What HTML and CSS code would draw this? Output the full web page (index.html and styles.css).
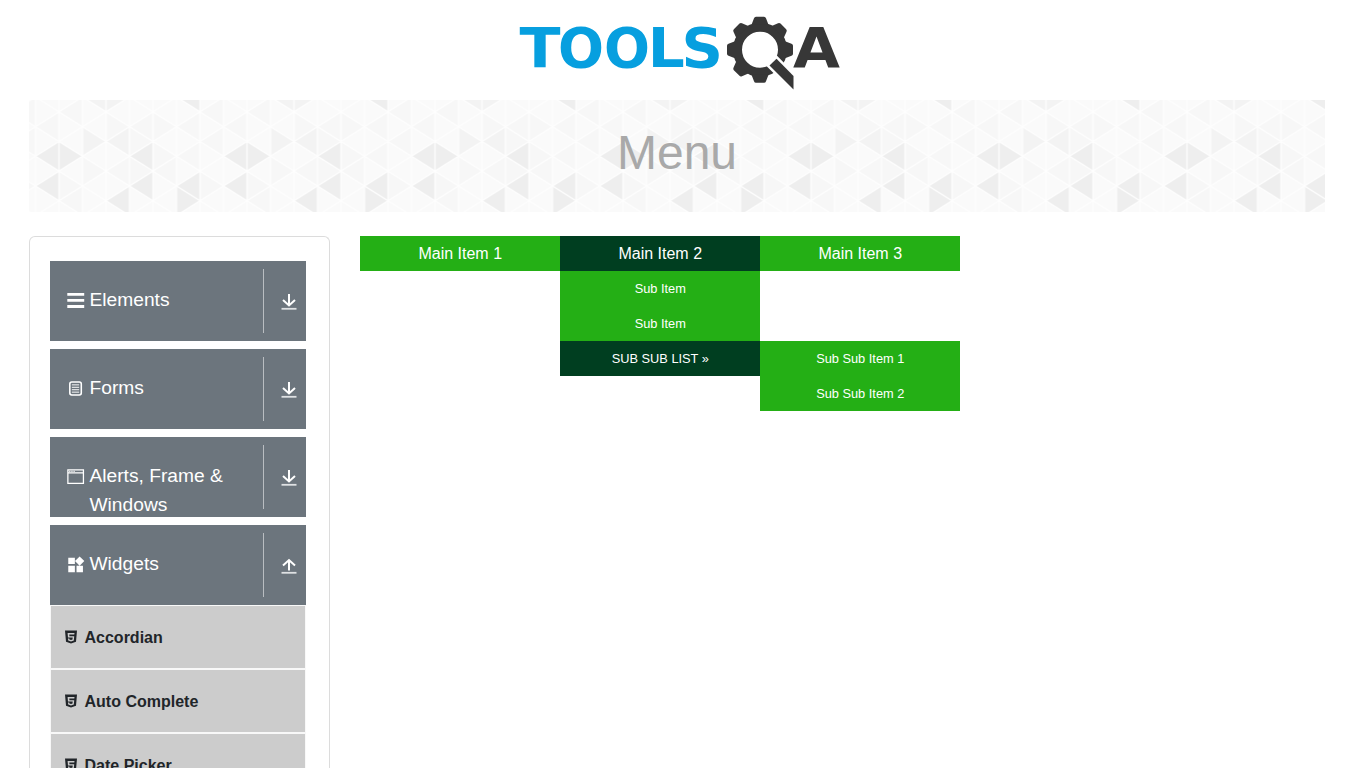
FILE: index.html
```
<!DOCTYPE html>
<html lang="en">
<head>
<meta charset="utf-8">
<title>Menu</title>
<link rel="stylesheet" href="styles.css">
</head>
<body>
<svg class="defs" width="0" height="0">
  <symbol id="down" viewBox="0 0 16 18"><path d="M8 1v11M2 7 8 12.500 14 7" fill="none" stroke="currentColor" stroke-width="2"/><path d="M.5 15.800h15" stroke="#dfe1e3" stroke-width="1.800"/></symbol>
  <symbol id="up" viewBox="0 0 16 18"><path d="M8 13.500V3M2 8.500 8 3 14 8.500" fill="none" stroke="currentColor" stroke-width="2"/><path d="M.5 15.800h15" stroke="#dfe1e3" stroke-width="1.800"/></symbol>
  <symbol id="html5" viewBox="0 0 12 14"><path fill="currentColor" fill-rule="evenodd" d="M0 .5h12l-1 11.200L6 13.500 1 11.700zM2.600 3l.4 4.500h4.700l-.2 2-1.500.5-1.600-.5-.1-.9H3l.2 2 2.800.9 2.800-.9.400-4.400H4.400L4.300 4.400h5L9.500 3z"/></symbol>
</svg>
<header class="header">
  <svg class="logo" viewBox="0 0 322 76" width="322" height="76" role="img" aria-label="TOOLSQA">
    <g class="logo-blue">
      <text x="0.500" y="51.800" textLength="41" lengthAdjust="spacingAndGlyphs">T</text>
      <text x="39" y="51.800" textLength="46" lengthAdjust="spacingAndGlyphs">O</text>
      <text x="85" y="51.800" textLength="46" lengthAdjust="spacingAndGlyphs">O</text>
      <text x="128.700" y="51.800" textLength="37" lengthAdjust="spacingAndGlyphs">L</text>
      <text x="162.500" y="51.800" textLength="41.500" lengthAdjust="spacingAndGlyphs">S</text>
    </g>
    <g transform="translate(241 34.700)" fill="#373737">
      <circle r="22.500" fill="none" stroke="#373737" stroke-width="9"/>
      <path id="tooth" d="M-8.500-25-6-31.500Q-5.500-33-4-33H4Q5.500-33 6-31.500L8.500-25z"/>
      <use href="#tooth" transform="rotate(45)"/><use href="#tooth" transform="rotate(90)"/>
      <use href="#tooth" transform="rotate(180)"/><use href="#tooth" transform="rotate(225)"/>
      <use href="#tooth" transform="rotate(270)"/><use href="#tooth" transform="rotate(315)"/>
      <path stroke="#fff" stroke-width="5" d="M16.500 9 33.500 26.300V39.800L9.500 15.800z"/>
      <path d="M16.500 9 33.500 26.300V39.800L9.500 15.800z"/>
    </g>
    <text class="logo-dark" x="274" y="51.800" textLength="47" lengthAdjust="spacingAndGlyphs">A</text>
  </svg>
</header>
<main class="container">
  <section class="banner">
    <svg class="pattern" width="1296" height="112">
      <defs>
        <path id="zz" d="M0 0l23.500 14.800 23.500-14.800 23.500 14.800 23.500-14.800 23.500 14.800 23.500-14.800 23.500 14.800 23.500-14.800"/>
        <path id="l" d="M0 0 23.500-14.800V14.800z"/>
        <path id="r" d="M0-14.800 23.500 0 0 14.800z"/>
        <pattern id="tri" x="6.500" y="0" width="188" height="112" patternUnits="userSpaceOnUse">
          <rect width="188" height="112" fill="#fafafa"/>
          <g fill="#f7f7f7">
            <use href="#l" x="23.500" y="11.800"/><use href="#l" x="0" y="26.700"/><use href="#r" x="23.500" y="86"/>
            <use href="#r" x="47" y="71"/><use href="#l" x="23.500" y="100.800"/><use href="#r" x="70.500" y="26.700"/>
            <use href="#l" x="70.500" y="71"/><use href="#r" x="94" y="71"/><use href="#r" x="117.500" y="56.300"/>
            <use href="#l" x="94" y="26.700"/><use href="#r" x="94" y="41.200"/><use href="#l" x="117.500" y="71"/>
            <use href="#r" x="117.500" y="26.700"/><use href="#l" x="141" y="26.700"/><use href="#l" x="164.500" y="41.200"/>
            <use href="#r" x="164.500" y="86"/><use href="#l" x="164.500" y="11.800"/><use href="#l" x="141" y="56.300"/>
          </g>
          <g fill="#f3f3f3">
            <use href="#r" x="47" y="41.200"/><use href="#l" x="70.500" y="41.200"/><use href="#l" x="47" y="-3"/><use href="#r" x="70.500" y="-3"/>
          </g>
          <g fill="#eee">
            <use href="#l" x="0" y="56.300"/><use href="#r" x="23.500" y="56.300"/><use href="#l" x="0" y="86"/>
            <use href="#l" x="94" y="56.300"/><use href="#l" x="94" y="86"/><use href="#l" x="70.500" y="100.800"/>
            <use href="#l" x="141" y="86"/><use href="#r" x="141" y="100.800"/><use href="#l" x="141" y="-3"/>
          </g>
          <g fill="none" stroke="#fefefe" stroke-width="1.300">
            <path d="M0 0V112M23.500 0V112M47 0V112M70.500 0V112M94 0V112M117.500 0V112M141 0V112M164.500 0V112M188 0V112"/>
            <use href="#zz" y="-3"/><use href="#zz" y="26.700"/><use href="#zz" y="56.300"/><use href="#zz" y="86"/>
            <use href="#zz" transform="translate(0 26.700) scale(1 -1)"/><use href="#zz" transform="translate(0 56.300) scale(1 -1)"/>
            <use href="#zz" transform="translate(0 86) scale(1 -1)"/><use href="#zz" transform="translate(0 115.600) scale(1 -1)"/>
          </g>
        </pattern>
      </defs>
      <rect width="1296" height="112" fill="url(#tri)"/>
    </svg>
    <h1 class="title">Menu</h1>
  </section>
  <div class="columns">
    <aside class="sidebar">
      <div class="group">
        <svg class="icon" viewBox="0 0 18 18"><path d="M.3 2.500h17.400M.3 8.700h17.400M.3 14.900h17.400" stroke="currentColor" stroke-width="2.900"/></svg>
        <span class="label">Elements</span><span class="toggle"><svg class="arrow"><use href="#down"/></svg></span>
      </div>
      <div class="group">
        <svg class="icon" viewBox="0 0 18 18"><rect x="2.900" y="2" width="11.800" height="13.400" rx="2" fill="none" stroke="currentColor" stroke-width="1.600"/><path d="M5 5h7.500M5 7.500h7.500M5 10h7.500M5 12.500h7.500" stroke="currentColor" stroke-width="1"/></svg>
        <span class="label">Forms</span><span class="toggle"><svg class="arrow"><use href="#down"/></svg></span>
      </div>
      <div class="group">
        <svg class="icon" viewBox="0 0 18 18"><path d="M.9 2h16v13.800H.9zM.9 4.900h16" fill="none" stroke="currentColor" stroke-width="1.300"/><path d="M2.300 3.400h1.200M4.500 3.400h1.200M6.700 3.400h1.200" stroke="currentColor" stroke-width="1.300"/></svg>
        <span class="label">Alerts, Frame &amp; Windows</span><span class="toggle"><svg class="arrow"><use href="#down"/></svg></span>
      </div>
      <div class="group group-open">
        <svg class="icon" viewBox="0 0 18 18"><path fill="currentColor" d="M1.300 1.700h6.800v6.600H1.300zM1.300 10h6.800v6.600H1.300zM9.800 10h6.600v6.600H9.800zM13 .4l4.800 4.700-4.800 4.800-4.800-4.800z"/></svg>
        <span class="label">Widgets</span><span class="toggle"><svg class="arrow"><use href="#up"/></svg></span>
      </div>
      <ul class="list">
        <li class="item"><svg class="html5"><use href="#html5"/></svg><span class="item-text">Accordian</span></li>
        <li class="item"><svg class="html5"><use href="#html5"/></svg><span class="item-text">Auto Complete</span></li>
        <li class="item"><svg class="html5"><use href="#html5"/></svg><span class="item-text">Date Picker</span></li>
      </ul>
    </aside>
    <nav class="menu">
      <div class="menu-col"><a class="main">Main Item 1</a></div>
      <div class="menu-col">
        <a class="main active">Main Item 2</a>
        <a class="sub">Sub Item</a>
        <a class="sub">Sub Item</a>
        <div class="nested">
          <a class="sub active">SUB SUB LIST »</a>
          <div class="flyout"><a class="sub">Sub Sub Item 1</a><a class="sub">Sub Sub Item 2</a></div>
        </div>
      </div>
      <div class="menu-col"><a class="main">Main Item 3</a></div>
    </nav>
  </div>
</main>
</body>
</html>
```
FILE: styles.css
```
* { box-sizing: border-box; }
html { overflow: hidden; }
body { margin: 0; height: 768px; overflow: hidden; background: #fff; color: #212529; font: 16px/1.5 "Liberation Sans", Arial, sans-serif; }
.defs { position: absolute; }
.header { height: 100px; padding: 15px 0 0 518.5px; }
.logo { display: block; overflow: visible; }
.logo-blue, .logo-dark { font: bold 55px "DejaVu Sans", sans-serif; fill: #079fdf; }
.logo-dark { fill: #373737; }
.container { width: 1296px; margin-left: 29px; }
.banner { position: relative; height: 112px; }
.pattern { position: absolute; inset: 0; }
.title { position: relative; margin: 0; padding-top: 24px; text-align: center; font-size: 48px; font-weight: 400; line-height: 57.600px; color: #a9a9a9; }
.columns { display: flex; gap: 30px; padding-top: 24px; align-items: flex-start; }
.sidebar { width: 301px; height: 532px; padding: 24px 23px 0 20px; border: 1px solid #dcdcdc; border-bottom: 0; border-radius: 6px 6px 0 0; overflow: hidden; }
.group { display: flex; height: 80px; margin-bottom: 8px; padding-left: 17px; background: #6c757d; color: #fff; font-size: 19.200px; overflow: hidden; }
.group-open { margin-bottom: 0; }
.icon { flex: none; width: 17.500px; height: 17.500px; margin: 31px 5px 0 0; }
.label { flex: 1; padding-top: 24.400px; line-height: 29px; }
.toggle { flex: none; width: 43px; height: 64px; margin-top: 8px; padding: 24px 0 0 16.500px; border-left: 1px solid #b9bdc1; }
.arrow { display: block; width: 16px; height: 18px; }
.list { list-style: none; margin: 0; padding: 0; }
.item { display: flex; align-items: center; gap: 7.500px; height: 64px; padding-left: 14px; background: #ccc; border: 1px solid #f8f8f8; font-weight: 700; }
.item-text { padding-top: 2px; }
.html5 { width: 12px; height: 14px; }
.menu { display: flex; }
.menu-col { width: 200px; }
.main, .sub { display: block; height: 35px; line-height: 35px; text-align: center; background: #24af15; color: #fff; }
.main { padding-left: 0.500px; }
.sub { font-size: 12.800px; padding-left: 0.500px; }
.menu .active { background: #003e20; }
.nested { position: relative; }
.flyout { position: absolute; left: 100%; top: 0; width: 200px; }
```
